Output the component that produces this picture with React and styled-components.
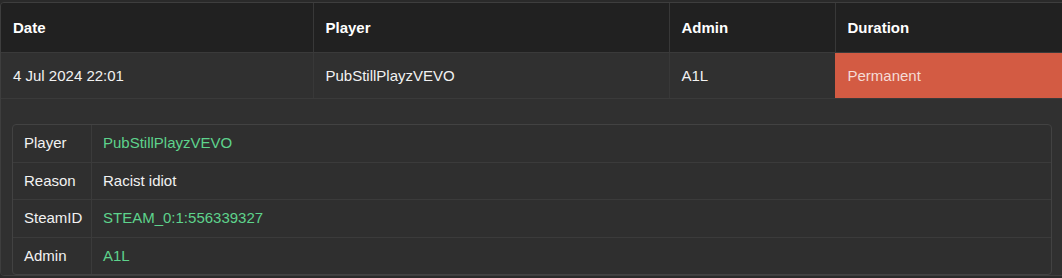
import React from "react";
import styled, { createGlobalStyle } from "styled-components";

const Global = createGlobalStyle`
  html, body { margin: 0; padding: 0; background: #2a2a2a; overflow: hidden; }
  body { padding-top: 2px; font-family: "Liberation Sans", Arial, sans-serif; font-size: 15px; }
`;

const Wrapper = styled.div`
  width: 1068px;
  border: 1px solid #3e3e3e;
  border-radius: 4px;
  overflow: hidden;
  background: #303030;
`;

const Table = styled.table`
  width: 100%;
  border-collapse: collapse;
  table-layout: fixed;
  font-size: 15px;
`;

const Th = styled.th`
  background: #212121;
  color: #ffffff;
  font-weight: 700;
  text-align: left;
  padding: 16px 12px 16px;
  line-height: 17px;
  border-left: 1px solid #383838;
  border-bottom: 1px solid #3a3a3a;
  &:first-child { border-left: none; }
`;

const Td = styled.td`
  background: ${(p) => (p.$danger ? "#d35b43" : "#303030")};
  color: ${(p) => (p.$danger ? "#f5dcd6" : "#f2f2f2")};
  padding: 14px 12px;
  line-height: 17px;
  border-left: 1px solid ${(p) => (p.$danger ? "#d35b43" : "#383838")};
  border-bottom: 1px solid #3a3a3a;
  &:first-child { border-left: none; }
`;

const DetailCell = styled.td`
  padding: 25px 10px 0 11px;
  background: #303030;
`;

const Panel = styled.div`
  border: 1px solid #424242;
  border-radius: 4px;
  background: #2f2f2f;
  width: 1038px;
`;

const InfoRow = styled.div`
  display: grid;
  grid-template-columns: 79px 1fr;
  border-top: ${(p) => (p.$first ? "none" : "1px solid #3b3b3b")};
`;

const Label = styled.div`
  color: #f2f2f2;
  padding: 10px 11px 10px 11px;
  line-height: 16.5px;
  border-right: 1px solid #3b3b3b;
`;

const Value = styled.div`
  color: ${(p) => (p.$green ? "#5ed38c" : "#f2f2f2")};
  padding: 10px 11px;
  line-height: 16.5px;
`;

const info = [
  { label: "Player", value: "PubStillPlayzVEVO", green: true },
  { label: "Reason", value: "Racist idiot" },
  { label: "SteamID", value: "STEAM_0:1:556339327", green: true },
  { label: "Admin", value: "A1L", green: true },
];

export default function App() {
  return (
    <>
      <Global />
      <Wrapper>
        <Table>
          <colgroup>
            <col style={{ width: 312 }} />
            <col style={{ width: 356 }} />
            <col style={{ width: 166 }} />
            <col />
          </colgroup>
          <thead>
            <tr>
              <Th>Date</Th>
              <Th>Player</Th>
              <Th>Admin</Th>
              <Th>Duration</Th>
            </tr>
          </thead>
          <tbody>
            <tr>
              <Td>4 Jul 2024 22:01</Td>
              <Td>PubStillPlayzVEVO</Td>
              <Td>A1L</Td>
              <Td $danger>Permanent</Td>
            </tr>
            <tr>
              <DetailCell colSpan={4}>
                <Panel>
                  {info.map((r, i) => (
                    <InfoRow key={r.label} $first={i === 0}>
                      <Label>{r.label}</Label>
                      <Value $green={r.green}>{r.value}</Value>
                    </InfoRow>
                  ))}
                </Panel>
              </DetailCell>
            </tr>
          </tbody>
        </Table>
      </Wrapper>
    </>
  );
}
